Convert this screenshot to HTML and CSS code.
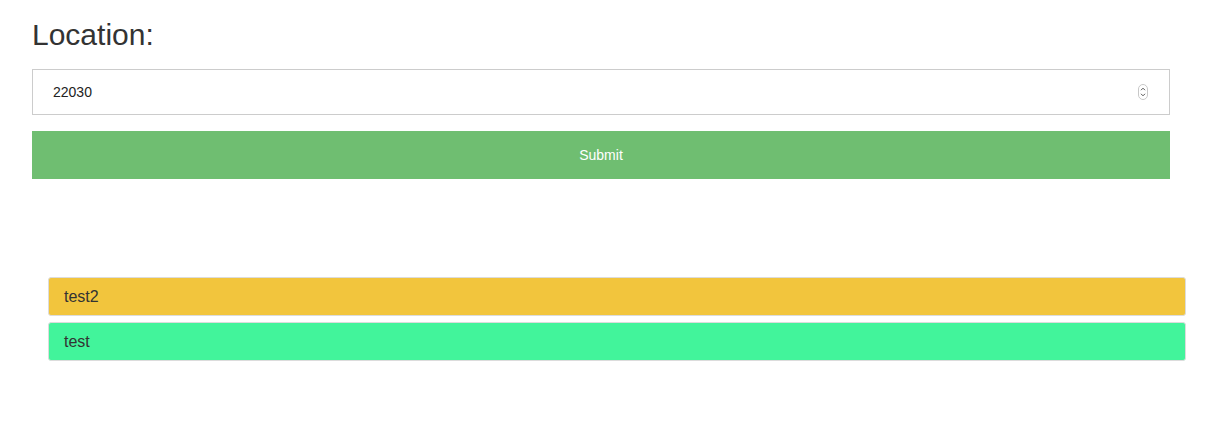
FILE: index.html
```html
<!DOCTYPE html>
<html lang="en">
<head>
<meta charset="utf-8">
<title>Location</title>
<link rel="stylesheet" href="styles.css">
</head>
<body>
<div class="page">
  <form class="form">
    <h2 class="title">Location:</h2>
    <div class="field">
      <input class="field-input" type="text" value="22030">
      <svg class="spinner" width="10" height="16" viewBox="0 0 10 16" aria-hidden="true">
        <rect x="0.5" y="0.5" width="9" height="15" rx="4.5" fill="#fff" stroke="#c8c8c8"/>
        <path d="M3 6.2 L5 4.2 L7 6.2" fill="none" stroke="#555" stroke-width="1"/>
        <path d="M3 9.8 L5 11.8 L7 9.8" fill="none" stroke="#555" stroke-width="1"/>
      </svg>
    </div>
    <button class="submit" type="button">Submit</button>
  </form>
  <div class="list">
    <div class="item item-yellow">test2</div>
    <div class="item item-green">test</div>
  </div>
</div>
</body>
</html>
```
FILE: styles.css
```css
html, body {
  margin: 0;
  padding: 0;
  background: #fff;
}

body {
  font-family: "Liberation Sans", Arial, Helvetica, sans-serif;
  color: #333;
}

.page {
  padding: 18px 0 0 32px;
  width: 1154px;
}

.form {
  width: 1138px;
  display: flex;
  flex-direction: column;
}

.title {
  margin: 0;
  font-size: 30px;
  font-weight: 400;
  line-height: 33px;
  color: #333;
}

.field {
  margin-top: 18px;
  height: 46px;
  box-sizing: border-box;
  border: 1px solid #ccc;
  display: flex;
  align-items: center;
  padding: 0 21px 0 20px;
  background: #fff;
}

.field-input {
  flex: 1;
  border: 0;
  outline: none;
  padding: 0;
  margin: 0;
  font-family: "Liberation Sans", Arial, sans-serif;
  font-size: 14px;
  color: #222;
  background: transparent;
}

.spinner {
  display: block;
  flex: none;
}

.submit {
  margin-top: 16px;
  height: 48px;
  border: 0;
  background: #6fbe71;
  color: #fff;
  font-family: "Liberation Sans", Arial, sans-serif;
  font-size: 14px;
  font-weight: 400;
  padding: 0;
  cursor: pointer;
}

.list {
  margin: 98px 0 0 16px;
  width: 1138px;
  display: flex;
  flex-direction: column;
  gap: 6px;
}

.item {
  height: 39px;
  box-sizing: border-box;
  border: 1px solid #dcdcdc;
  border-radius: 3px;
  padding: 0 15px;
  display: flex;
  align-items: center;
  font-size: 16px;
  color: #333;
}

.item-yellow {
  background: #f2c53d;
}

.item-green {
  background: #42f49b;
}
```
